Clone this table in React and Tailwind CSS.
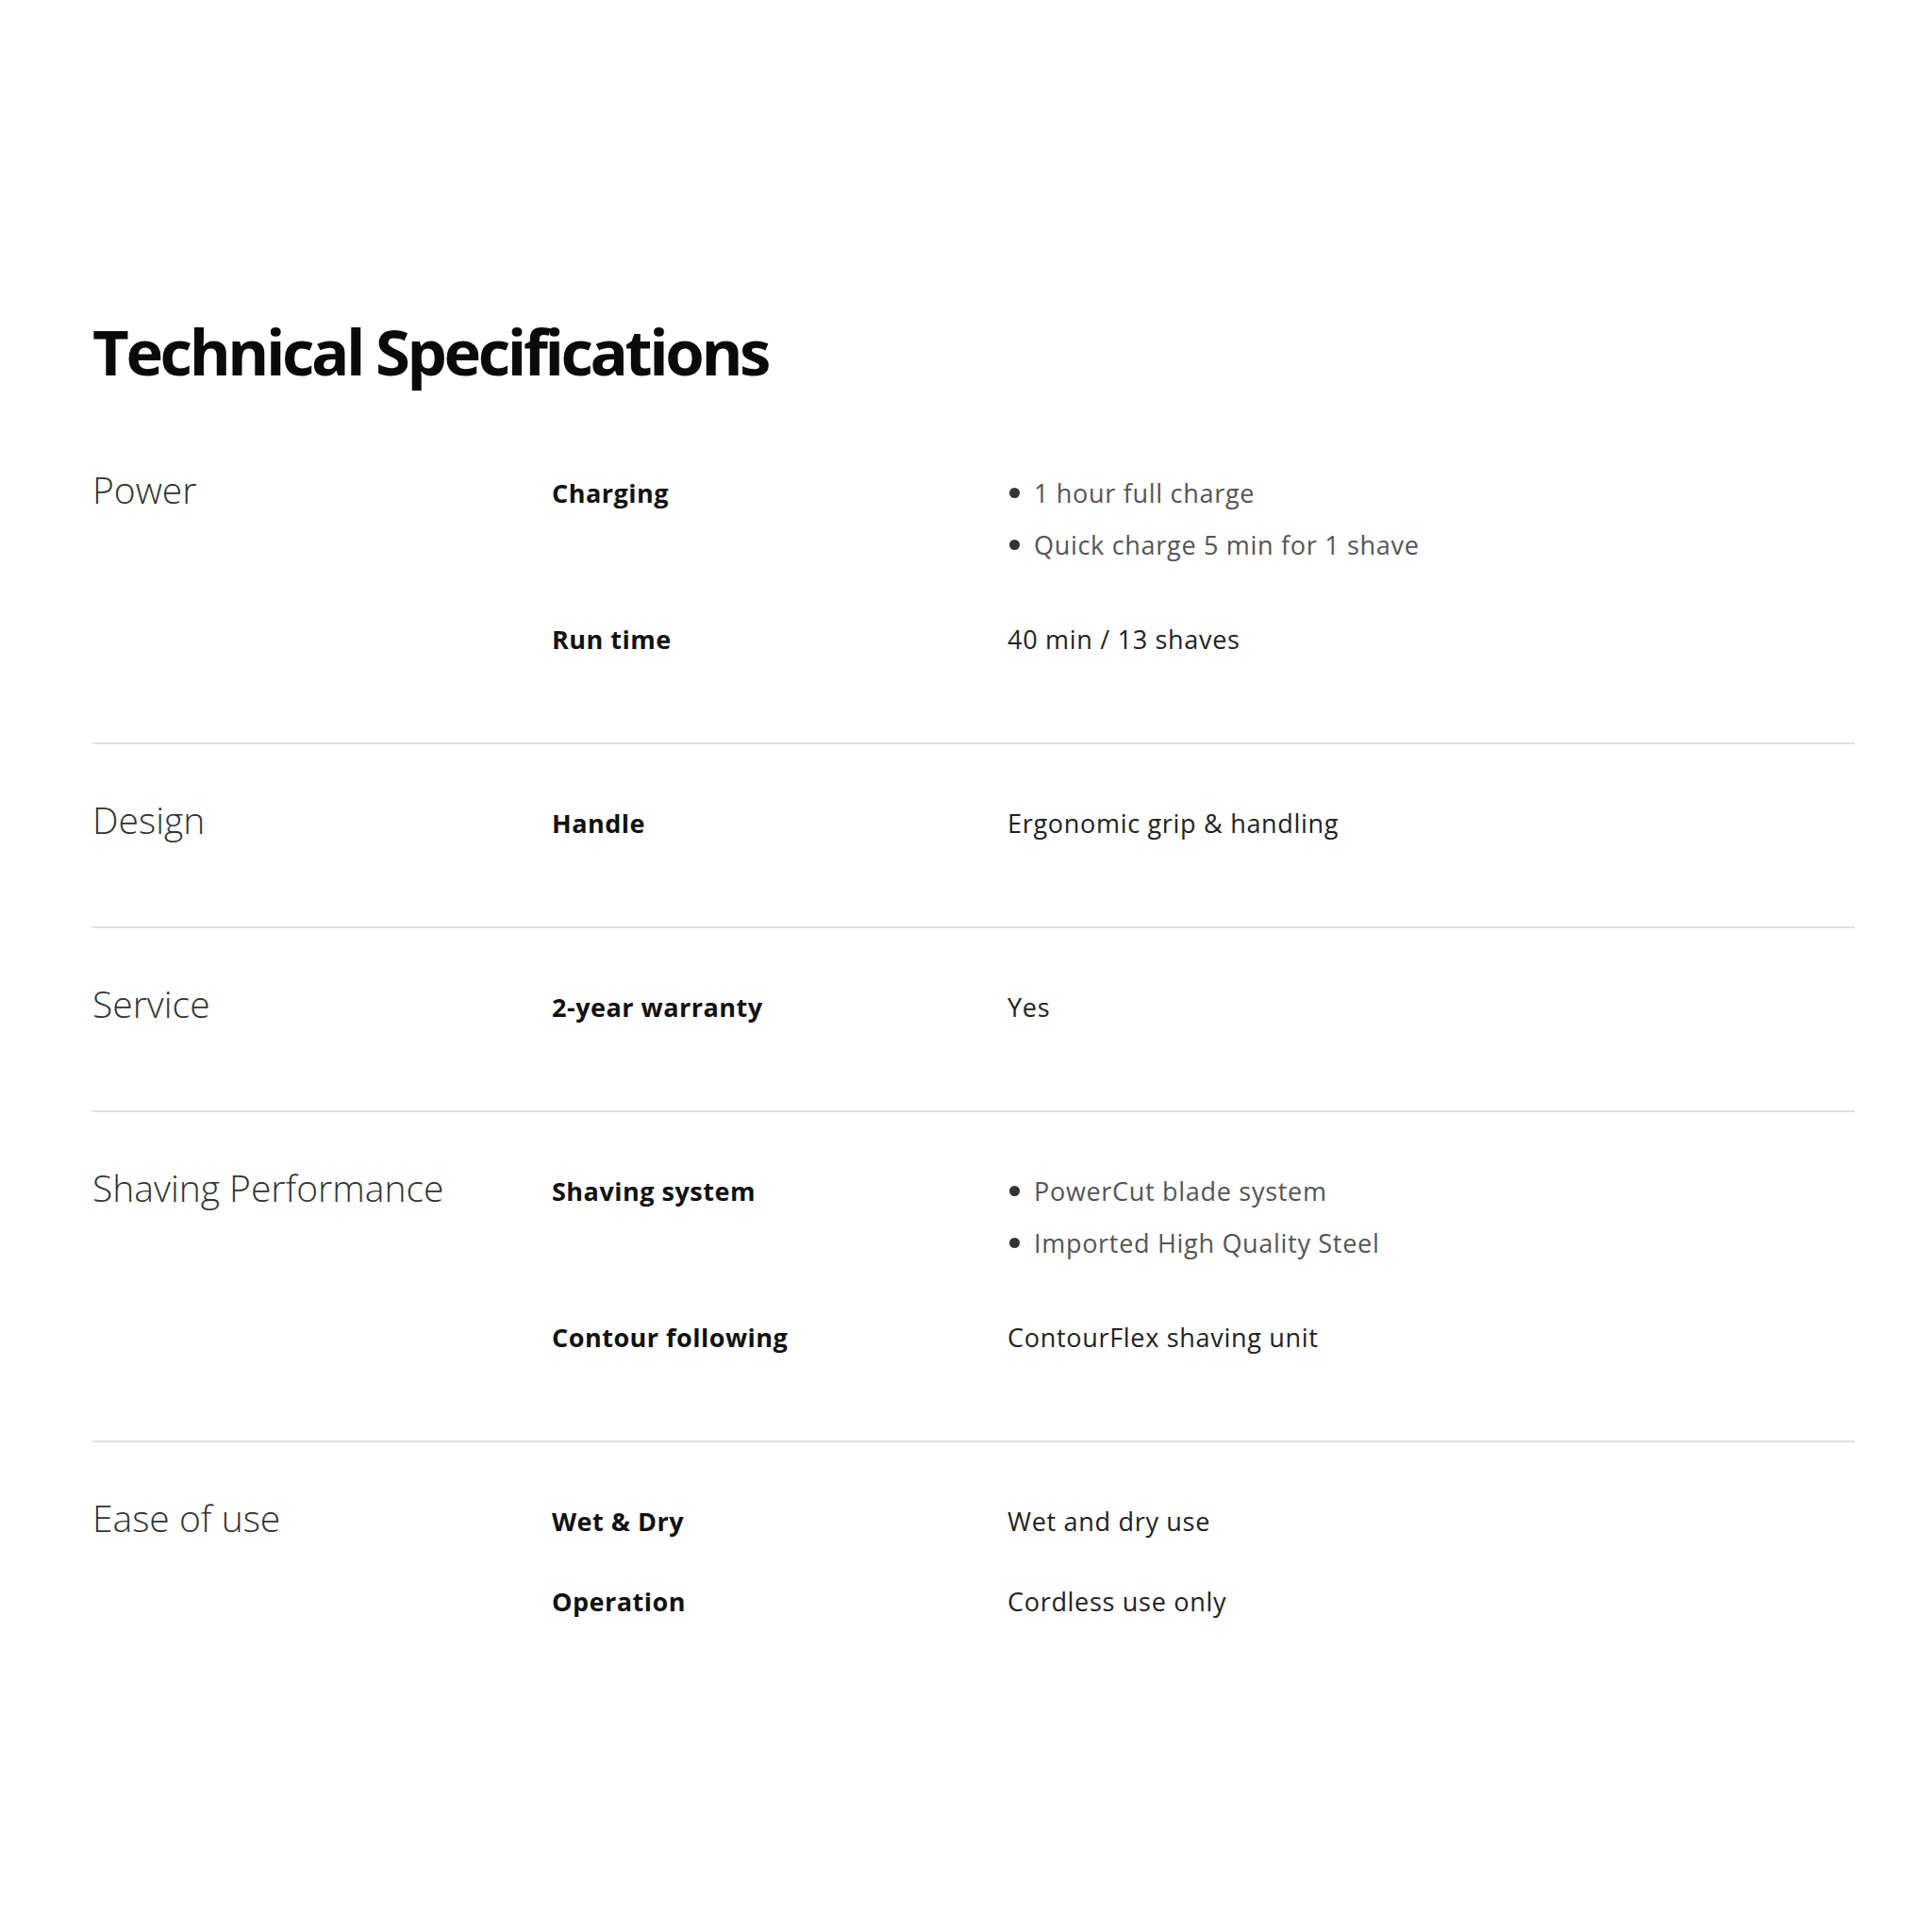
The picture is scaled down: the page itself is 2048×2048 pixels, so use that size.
import React from 'react';

const specs = [
    {
        category: 'Power',
        items: [
            { label: 'Charging', list: ['1 hour full charge', 'Quick charge 5 min for 1 shave'] },
            { label: 'Run time', value: '40 min / 13 shaves' },
        ],
    },
    {
        category: 'Design',
        items: [{ label: 'Handle', value: 'Ergonomic grip & handling' }],
    },
    {
        category: 'Service',
        items: [{ label: '2-year warranty', value: 'Yes' }],
    },
    {
        category: 'Shaving Performance',
        items: [
            { label: 'Shaving system', list: ['PowerCut blade system', 'Imported High Quality Steel'] },
            { label: 'Contour following', value: 'ContourFlex shaving unit' },
        ],
    },
    {
        category: 'Ease of use',
        items: [
            { label: 'Wet & Dry', value: 'Wet and dry use' },
            { label: 'Operation', value: 'Cordless use only' },
        ],
    },
];

const SpecItem = ({ item }) => (
    <div className="flex">
        <div className="w-[483px] shrink-0 text-[27px] leading-[56px] tracking-[0.5px] font-bold text-[#111]">{item.label}</div>
        <div className="flex-1">
            {item.list ? (
                <ul className="mb-[16px]">
                    {item.list.map((line) => (
                        <li key={line} className="flex items-center text-[27px] leading-[55px] tracking-[0.7px] text-[#555]">
                            <span className="ml-[2px] mr-[15px] w-[11px] h-[11px] rounded-full bg-[#333] shrink-0"></span>
                            {line}
                        </li>
                    ))}
                </ul>
            ) : (
                <div className="text-[27px] leading-[56px] tracking-[0.7px] text-[#222]">{item.value}</div>
            )}
        </div>
    </div>
);

const App = () => {
    return (
        <div className="min-h-[2048px] bg-white font-['Open_Sans',sans-serif] pt-[339px] pl-[98px]">
            <div className="w-[1868px]">
                <h1 className="text-[67px] leading-[67px] tracking-[-3.4px] font-bold text-[#0a0a0a] mb-[33px]">Technical Specifications</h1>
                {specs.map((section, index) => (
                    <div key={section.category}>
                        {index > 0 && <div className="h-[2px] bg-[#e2e2e2]"></div>}
                        <div className="flex pt-[56px] pb-[81px]">
                            <div className="w-[487px] shrink-0 text-[39px] leading-[48px] font-light text-[#333]">{section.category}</div>
                            <div className="flex-1 flex flex-col gap-[29px]">
                                {section.items.map((item) => (
                                    <SpecItem key={item.label} item={item} />
                                ))}
                            </div>
                        </div>
                    </div>
                ))}
            </div>
        </div>
    );
};

export default App;
